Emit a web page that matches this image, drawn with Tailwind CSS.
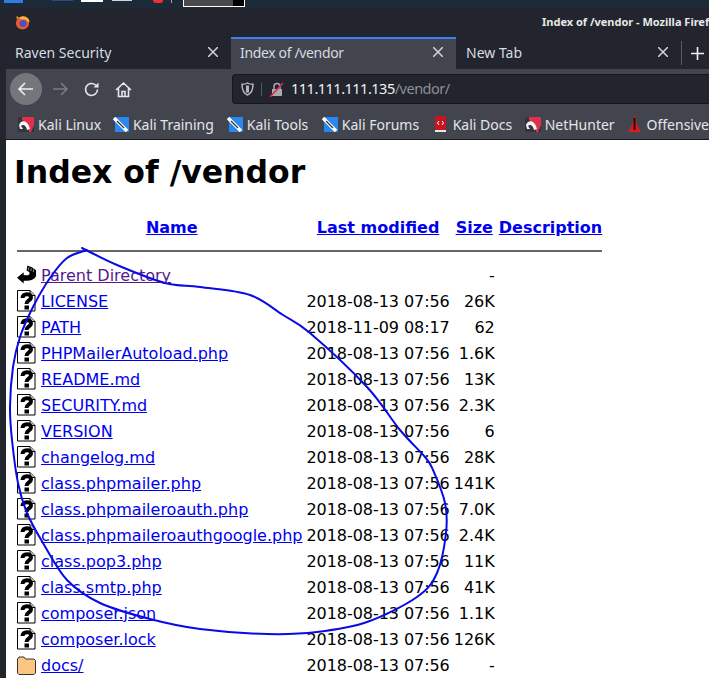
<!DOCTYPE html>
<html lang="en">
<head>
    <meta charset="UTF-8">
    <title>Index of /vendor - Mozilla Firefox</title>
    <script src="https://cdn.jsdelivr.net/npm/@tailwindcss/browser@4"></script>
</head>
<body class="relative h-[678px] w-[709px] overflow-hidden bg-[#22252d] font-['Noto_Sans',sans-serif]">

<!-- Desktop strip -->
<div class="flex h-[8px] bg-[#1c2a38]">
    <div class="ml-[4px] h-[3px] w-[19px] bg-[#2f7de1]"></div>
    <div class="ml-[29px] h-[1px] w-[21px] bg-[#2b4a8c]"></div>
    <div class="ml-[8px] h-[2px] w-[22px] bg-white"></div>
    <div class="ml-[9px] h-[1px] w-[20px] bg-gray-300"></div>
    <div class="ml-[21px] h-[3px] w-[10px] rounded-b-full bg-[#e8322e]"></div>
    <div class="ml-[8px] h-[3px] w-px bg-gray-400"></div>
    <div class="ml-[11px] flex h-[7px] w-[62px] border-x border-b border-white">
        <div class="flex-1 bg-[#4a4a4a]"></div>
        <div class="w-[11px] bg-black"></div>
    </div>
</div>

<!-- Title bar -->
<div class="flex h-[29px] items-center overflow-hidden bg-[#22252d] pl-[15px]">
    <svg class="h-[15px] w-[15px] shrink-0" viewBox="0 0 16 16">
        <circle cx="8" cy="8.5" r="7" fill="#f0592b"/>
        <path d="M2 1 C1 5 2 4 4 3 C8 0 13 1 15 5 C16 8 15 9 13 6 C10 4 7 5 7 5 Z" fill="#fbb03b"/>
        <circle cx="8.5" cy="9" r="3.8" fill="#4a4fc4"/>
    </svg>
    <div class="ml-[512px] shrink-0 text-[11px] font-bold whitespace-nowrap text-[#e8e8e8]">Index of /vendor - Mozilla Firefox</div>
</div>

<!-- Tabs -->
<div class="flex h-[32px] items-stretch bg-[#22252d] pl-[6px] text-[14px] text-[#d5dbe3]">
    <div class="flex w-[225px] items-center justify-between pb-[2px] pl-[9px] pr-[13px]">
        <span>Raven Security</span>
        <svg class="h-[10px] w-[10px]" viewBox="0 0 10 10" fill="none" stroke="#d5d5d5" stroke-width="1.5"><path d="M0 0 L10 10 M10 0 L0 10"/></svg>
    </div>
    <div class="flex w-[225px] items-center justify-between border-t-[2px] border-[#3b82f6] bg-[#42454e] pb-[4px] pl-[9px] pr-[13px]">
        <span class="tracking-[-0.35px]">Index of /vendor</span>
        <svg class="h-[10px] w-[10px]" viewBox="0 0 10 10" fill="none" stroke="#d5d5d5" stroke-width="1.5"><path d="M0 0 L10 10 M10 0 L0 10"/></svg>
    </div>
    <div class="flex w-[225px] items-center justify-between pb-[2px] pl-[10px] pr-[13px]">
        <span>New Tab</span>
        <svg class="h-[10px] w-[10px]" viewBox="0 0 10 10" fill="none" stroke="#d5d5d5" stroke-width="1.5"><path d="M0 0 L10 10 M10 0 L0 10"/></svg>
    </div>
    <div class="my-[4px] w-px bg-[#5a5d66]"></div>
    <svg class="ml-[9px] mt-[10px] h-[13px] w-[13px]" viewBox="0 0 13 13" stroke="#f0f0f0" stroke-width="1.6"><path d="M6.5 0 V13 M0 6.5 H13"/></svg>
</div>

<!-- Nav bar -->
<div class="ml-[6px] flex h-[40px] items-center bg-[#42454e]">
    <div class="ml-[4px] flex h-[32px] w-[32px] items-center justify-center rounded-full bg-[#74767c]">
        <svg class="h-[18px] w-[18px]" viewBox="0 0 18 18" fill="none" stroke="#f0f0f0" stroke-width="1.6"><path d="M16 9 H2 M8 3 L2 9 L8 15"/></svg>
    </div>
    <svg class="ml-[9px] h-[18px] w-[18px]" viewBox="0 0 18 18" fill="none" stroke="#7b7d83" stroke-width="1.6"><path d="M2 9 H16 M10 3 L16 9 L10 15"/></svg>
    <svg class="ml-[14px] h-[17px] w-[17px]" viewBox="0 0 17 17" fill="none" stroke="#e8e8e8" stroke-width="1.6"><path d="M14.5 8.5 A6 6 0 1 1 12.5 4 L15 6"/><path d="M15.5 1.5 V6.5 H10.5" fill="#e8e8e8" stroke="none"/></svg>
    <svg class="ml-[15px] h-[17px] w-[17px]" viewBox="0 0 17 17" fill="none" stroke="#e8e8e8" stroke-width="1.6"><path d="M1 9 L8.5 2 L16 9 M3.5 7.5 V15.5 H13.5 V7.5 M7 15.5 V10.5 H10 V15.5"/></svg>
    <div class="ml-[100px] flex h-[30px] flex-1 items-center rounded-l-[4px] border-y border-l border-[#15171c] bg-[#22252d]">
        <svg class="ml-[8px] h-[14px] w-[13px]" viewBox="0 0 13 14" fill="none" stroke="#b5b7bb" stroke-width="1.5"><path d="M6.5 1 C8 2 10 2.3 12 2.3 C12 8 10 11.5 6.5 13 C3 11.5 1 8 1 2.3 C3 2.3 5 2 6.5 1 Z"/><path d="M6.5 3.5 V10.5" stroke-width="3"/></svg>
        <div class="ml-[7px] h-[13px] w-px bg-[#55585f]"></div>
        <svg class="ml-[7px] h-[15px] w-[15px]" viewBox="0 0 15 15"><rect x="3" y="7" width="10" height="7" fill="#a8aaae"/><path d="M5 7 V4.5 A3 3 0 0 1 11 4.5 V7" fill="none" stroke="#a8aaae" stroke-width="1.5"/><path d="M1 15 L14 1" stroke="#e22850" stroke-width="1.5"/></svg>
        <span class="ml-[7px] text-[14.5px] tracking-[-0.5px] text-[#f2f2f2]">111.111.111.135<span class="text-[#8d8f95]">/vendor/</span></span>
    </div>
</div>

<!-- Bookmarks -->
<div class="ml-[6px] flex h-[30px] items-center bg-[#42454e] pl-[12px] text-[14px] whitespace-nowrap text-[#e4e6ea]">
    <span class="flex w-[95px] items-center gap-[4px]"><svg class="h-[15px] w-[16px] shrink-0" viewBox="0 0 16 15"><rect width="16" height="15" rx="1" fill="#33353c"/><path d="M4 0 H16 V8 L13 15 H11 C11 10 9 5 4 3 Z" fill="#e0314b"/><path d="M1 8 C3 2 10 3 12 12 L9 13 C8 8 5 7 3 9 L5 12 L2 12 Z" fill="#f4f4f4"/></svg>Kali Linux</span>
    <span class="flex w-[114px] items-center gap-[4px]"><svg class="h-[15px] w-[16px] shrink-0" viewBox="0 0 16 15"><path d="M2 0 H16 V15 H2 Z" fill="#2a86f0"/><path d="M1 1 L14 14" stroke="#fff" stroke-width="3.5"/><path d="M4 4 L11 11" stroke="#333" stroke-width="1.2"/></svg>Kali Training</span>
    <span class="flex w-[95px] items-center gap-[4px]"><svg class="h-[15px] w-[16px] shrink-0" viewBox="0 0 16 15"><path d="M2 0 H16 V15 H2 Z" fill="#2a86f0"/><path d="M1 1 L14 14" stroke="#fff" stroke-width="3.5"/><path d="M4 4 L11 11" stroke="#333" stroke-width="1.2"/></svg>Kali Tools</span>
    <span class="flex w-[112px] items-center gap-[4px]"><svg class="h-[15px] w-[16px] shrink-0" viewBox="0 0 16 15"><path d="M2 0 H16 V15 H2 Z" fill="#2a86f0"/><path d="M1 1 L14 14" stroke="#fff" stroke-width="3.5"/><path d="M4 4 L11 11" stroke="#333" stroke-width="1.2"/></svg>Kali Forums</span>
    <span class="flex w-[91px] items-center gap-[6px]"><svg class="h-[16px] w-[13px] shrink-0" viewBox="0 0 13 16"><rect x="1" y="0" width="11" height="14" fill="#c8141e"/><rect x="1" y="14" width="11" height="2" fill="#e8e8e8"/><path d="M5 5 L3.5 7 L5 9 M8 5 L9.5 7 L8 9" fill="none" stroke="#fff"/></svg>Kali Docs</span>
    <span class="flex w-[103px] items-center gap-[4px]"><svg class="h-[15px] w-[16px] shrink-0" viewBox="0 0 16 15"><rect width="16" height="15" rx="1" fill="#33353c"/><path d="M4 0 H16 V8 L13 15 H11 C11 10 9 5 4 3 Z" fill="#e0314b"/><path d="M1 8 C3 2 10 3 12 12 L9 13 C8 8 5 7 3 9 L5 12 L2 12 Z" fill="#f4f4f4"/></svg>NetHunter</span>
    <span class="flex items-center gap-[6px]"><svg class="h-[18px] w-[13px] shrink-0" viewBox="0 0 13 18"><path d="M6.5 0 L9 10 L13 17 H0 L4 10 Z" fill="#d81c24"/><path d="M6.5 3 V15" stroke="#300" stroke-width="2"/></svg>Offensive</span>
</div>

<!-- Page -->
<div class="ml-[6px] h-[539px] overflow-hidden border-t border-[#15171c] bg-white p-[8px] font-['DejaVu_Sans',sans-serif] text-[16px] leading-[19px] text-black">
    <h1 class="mt-[6px] text-[31.5px] leading-[37px] font-bold whitespace-nowrap">Index of /vendor</h1>
    <table class="mt-[24px] border-separate border-spacing-[2px]">
        <thead>
            <tr>
                <th class="p-px"></th>
                <th class="p-px"><a href="#" class="text-[#0000ee] underline">Name</a></th>
                <th class="p-px"><a href="#" class="text-[#0000ee] underline">Last modified</a></th>
                <th class="p-px"><a href="#" class="text-[#0000ee] underline">Size</a></th>
                <th class="p-px"><a href="#" class="text-[#0000ee] underline">Description</a></th>
            </tr>
            <tr><th colspan="5" class="p-px"><div class="mt-[9px] mb-[8px] h-[2px] bg-[#666]"></div></th></tr>
        </thead>
        <tbody id="rows"></tbody>
    </table>
</div>

<!-- Hand drawn circle -->
<svg class="pointer-events-none absolute top-0 left-0 h-[678px] w-[709px]" viewBox="0 0 709 678" fill="none" stroke="#0a0ae6" stroke-width="2" stroke-linecap="round" stroke-linejoin="round">
    <path id="circle"/>
</svg>

<script>
    const files = [
        ['LICENSE', '2018-08-13 07:56', '26K'],
        ['PATH', '2018-11-09 08:17', '62'],
        ['PHPMailerAutoload.php', '2018-08-13 07:56', '1.6K'],
        ['README.md', '2018-08-13 07:56', '13K'],
        ['SECURITY.md', '2018-08-13 07:56', '2.3K'],
        ['VERSION', '2018-08-13 07:56', '6'],
        ['changelog.md', '2018-08-13 07:56', '28K'],
        ['class.phpmailer.php', '2018-08-13 07:56', '141K'],
        ['class.phpmaileroauth.php', '2018-08-13 07:56', '7.0K'],
        ['class.phpmaileroauthgoogle.php', '2018-08-13 07:56', '2.4K'],
        ['class.pop3.php', '2018-08-13 07:56', '11K'],
        ['class.smtp.php', '2018-08-13 07:56', '41K'],
        ['composer.json', '2018-08-13 07:56', '1.1K'],
        ['composer.lock', '2018-08-13 07:56', '126K'],
    ];

    const pageIcon = `<svg class="h-[22px] w-[20px]" viewBox="0 0 20 22"><path d="M.5 .5 H13 L18 5.5 V21 H.5 Z" fill="#fff" stroke="#000"/><path d="M13 .5 V5.5 H18" fill="#bbb" stroke="#000"/><path d="M5.5 8 C5.5 3 14 3 14 7.5 C14 10.5 9.5 10.5 9.5 14" fill="none" stroke="#000" stroke-width="4"/><rect x="7.5" y="15.5" width="4.5" height="4"/></svg>`;
    const backIcon = `<svg class="h-[22px] w-[20px] overflow-visible" viewBox="0 0 21 22"><path d="M0 14 L7 8 V11 C11 12 14 11 13 8 L10 6 L11 1 L16 3 L20 6 V12 C18 17 12 17 7 17 V20 Z"/><path d="M12.5 3 L12 6 M15 4 L14.5 7 M17.5 5 L17 8" stroke="#999"/></svg>`;
    const folderIcon = `<svg class="h-[22px] w-[20px]" viewBox="0 0 20 22"><path d="M.5 5 L2 3 H7 L8.5 5 H17 L18.5 6.5 V19 L17 20.5 H2 L.5 19 Z" fill="#fdc584" stroke="#333"/></svg>`;

    function row(icon, name, date, size, linkColor) {
        return `<tr>
            <td class="p-px align-top">${icon}</td>
            <td class="p-px"><a href="#" class="${linkColor} underline">${name}</a></td>
            <td class="p-px text-right tracking-[-0.06px]">${date}</td>
            <td class="p-px text-right">${size}</td>
            <td class="p-px"></td>
        </tr>`;
    }

    let html = row(backIcon, 'Parent Directory', '', '-', 'text-[#551a8b]');
    files.forEach(f => { html += row(pageIcon, f[0], f[1], f[2], 'text-[#0000ee]'); });
    html += row(folderIcon, 'docs/', '2018-08-13 07:56', '-', 'text-[#0000ee]');
    document.getElementById('rows').innerHTML = html;

    // pen stroke, smoothed through the traced points
    const pts = [[82,248],[117,265],[165,283],[200,287],[250,295],[283,315],[310,333],[367,387],[400,430],[425,457],[433,470],[445,503],[446,533],[437,573],[417,597],[367,622],[317,632],[267,634],[200,629],[150,619],[100,603],[67,580],[43,543],[27,513],[18,483],[12,440],[10,407],[13,367],[20,337],[33,307],[50,278],[67,258],[87,250]];
    let d = `M${pts[0][0]} ${pts[0][1]}`;
    for (let i = 0; i < pts.length - 1; i++) {
        const p0 = pts[Math.max(i - 1, 0)], p1 = pts[i], p2 = pts[i + 1], p3 = pts[Math.min(i + 2, pts.length - 1)];
        d += ` C${p1[0] + (p2[0] - p0[0]) / 6} ${p1[1] + (p2[1] - p0[1]) / 6} ${p2[0] - (p3[0] - p1[0]) / 6} ${p2[1] - (p3[1] - p1[1]) / 6} ${p2[0]} ${p2[1]}`;
    }
    document.getElementById('circle').setAttribute('d', d);
</script>

</body>
</html>
